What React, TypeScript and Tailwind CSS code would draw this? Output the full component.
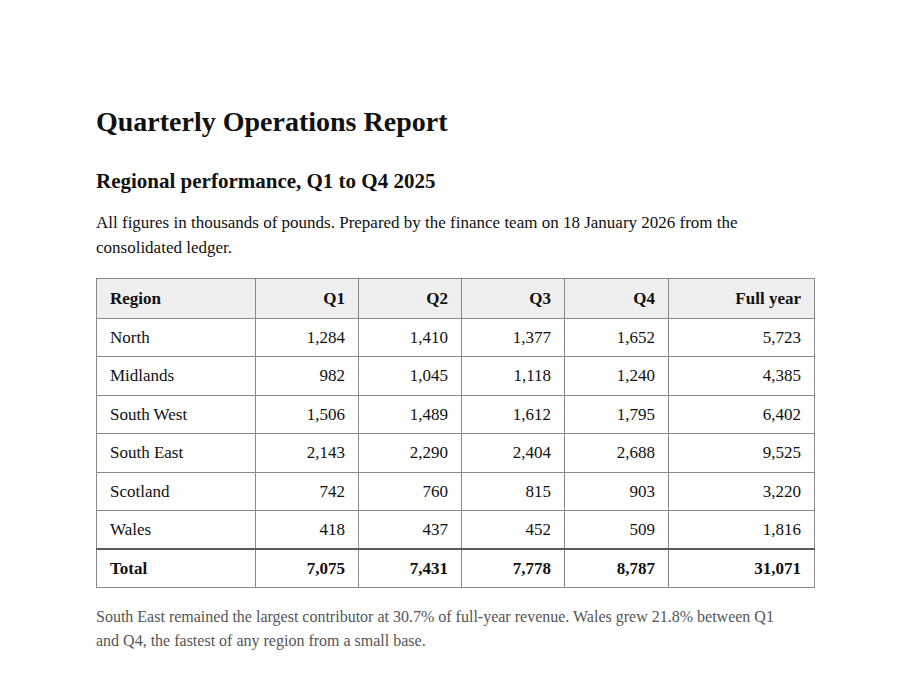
import React from 'react'

const rows = [
  ['North', '1,284', '1,410', '1,377', '1,652', '5,723'],
  ['Midlands', '982', '1,045', '1,118', '1,240', '4,385'],
  ['South West', '1,506', '1,489', '1,612', '1,795', '6,402'],
  ['South East', '2,143', '2,290', '2,404', '2,688', '9,525'],
  ['Scotland', '742', '760', '815', '903', '3,220'],
  ['Wales', '418', '437', '452', '509', '1,816'],
]

const total = ['Total', '7,075', '7,431', '7,778', '8,787', '31,071']
const heads = ['Region', 'Q1', 'Q2', 'Q3', 'Q4', 'Full year']
const widths = ['w-[159px]', 'w-[103px]', 'w-[103px]', 'w-[103px]', 'w-[104px]', 'w-[146px]']

export default function App() {
  return (
    <div className="min-h-[700px] bg-white font-['Liberation_Serif',Georgia,serif] text-[#111]">
      <div className="ml-[96px] w-[718px] pt-[106px]">
        <h1 className="text-[28px] font-bold leading-[32px]">Quarterly Operations Report</h1>
        <h2 className="mt-[30px] text-[21px] font-bold leading-[26px]">Regional performance, Q1 to Q4 2025</h2>
        <p className="mt-[16px] text-[17px] leading-[25px]">
          All figures in thousands of pounds. Prepared by the finance team on 18 January 2026 from the consolidated ledger.
        </p>

        <table className="mt-[18px] w-full table-fixed border-collapse text-[17px]">
          <thead>
            <tr className="bg-[#efefef]">
              {heads.map((h, i) => (
                <th
                  key={h}
                  className={`${widths[i]} border border-[#8a8a8a] px-[13px] py-[7px] leading-[25px] font-bold ${i === 0 ? 'text-left' : 'text-right'}`}
                >
                  {h}
                </th>
              ))}
            </tr>
          </thead>
          <tbody>
            {rows.map((r) => (
              <tr key={r[0]}>
                {r.map((c, i) => (
                  <td
                    key={i}
                    className={`border border-[#8a8a8a] px-[13px] py-[7px] leading-[23.4px] ${i === 0 ? 'text-left' : 'text-right'}`}
                  >
                    {c}
                  </td>
                ))}
              </tr>
            ))}
            <tr>
              {total.map((c, i) => (
                <td
                  key={i}
                  className={`border border-[#8a8a8a] border-t-2 border-t-[#5a5a5a] px-[13px] py-[7px] leading-[23px] font-bold ${i === 0 ? 'text-left' : 'text-right'}`}
                >
                  {c}
                </td>
              ))}
            </tr>
          </tbody>
        </table>

        {/* note under the table */}
        <p className="mt-[17px] max-w-[690px] text-[16px] leading-[24px] text-[#555]">
          South East remained the largest contributor at 30.7% of full-year revenue. Wales grew 21.8% between Q1 and Q4, the fastest of any region from a small base.
        </p>
      </div>
    </div>
  )
}
